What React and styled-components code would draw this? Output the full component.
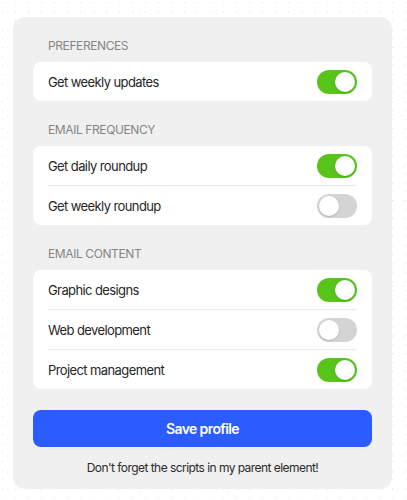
import React, { useState } from "react"
import styled, { createGlobalStyle } from "styled-components"

const GlobalStyle = createGlobalStyle`
   html, body {
      margin: 0;
      padding: 0;
   }
   body {
      font-family: Inter, "Noto Sans", sans-serif;
      background-color: #fff;
      background-image:
         radial-gradient(circle at 20% 30%, rgba(240, 170, 110, 0.22) 0.6px, transparent 1.2px),
         radial-gradient(circle at 70% 80%, rgba(240, 170, 110, 0.14) 0.6px, transparent 1.2px);
      background-size: 13px 9px, 11px 17px;
   }
`

const sections = [
   {
      title: "Preferences",
      items: [{ label: "Get weekly updates", on: true }],
   },
   {
      title: "Email frequency",
      items: [
         { label: "Get daily roundup", on: true },
         { label: "Get weekly roundup", on: false },
      ],
   },
   {
      title: "Email content",
      items: [
         { label: "Graphic designs", on: true },
         { label: "Web development", on: false },
         { label: "Project management", on: true },
      ],
   },
]

const Toggle = ({ on, onClick }) => (
   <Track $on={on} onClick={onClick}>
      <Knob $on={on} />
   </Track>
)

const App = () => {
   const [state, setState] = useState(sections.map(s => s.items.map(i => i.on)))

   const flip = (si, ii) => {
      setState(prev => prev.map((row, r) => row.map((v, c) => (r === si && c === ii ? !v : v))))
   }

   return (
      <Page>
         <GlobalStyle />
         <Card>
            {sections.map((section, si) => (
               <Section key={section.title}>
                  <Label>{section.title}</Label>
                  <Group>
                     {section.items.map((item, ii) => (
                        <Row key={item.label}>
                           <RowText>{item.label}</RowText>
                           <Toggle on={state[si][ii]} onClick={() => flip(si, ii)} />
                        </Row>
                     ))}
                  </Group>
               </Section>
            ))}
            <SaveButton>Save profile</SaveButton>
            <Note>Don't forget the scripts in my parent element!</Note>
         </Card>
      </Page>
   )
}

const Page = styled.div`
   padding: 17px 15px 12px 13px;
`

const Card = styled.div`
   display: flex;
   flex-direction: column;
   background: #f0f0f0;
   border-radius: 12px;
   padding: 21px 20px 13px;
`

const Section = styled.div`
   display: flex;
   flex-direction: column;
   gap: 8px;
   margin-bottom: 21px;
   &:last-of-type {
      margin-bottom: 20px;
   }
`

const Label = styled.div`
   font-size: 12px;
   line-height: 16px;
   text-transform: uppercase;
   color: #858585;
   padding-left: 15px;
   letter-spacing: -0.4px;
`

const Group = styled.div`
   background: #fff;
   border-radius: 8px;
   padding: 0 15px;
`

const Row = styled.div`
   display: flex;
   align-items: center;
   justify-content: space-between;
   height: 39px;
   & + & {
      border-top: 1px solid #ebebeb;
   }
`

const RowText = styled.span`
   font-size: 13px;
   letter-spacing: -0.6px;
   color: #262626;
`

const Track = styled.div`
   position: relative;
   width: 40px;
   height: 24px;
   border-radius: 12px;
   background: ${p => (p.$on ? "#58c41a" : "#d4d4d4")};
   cursor: pointer;
   flex-shrink: 0;
`

const Knob = styled.div`
   position: absolute;
   top: 2px;
   left: ${p => (p.$on ? "18px" : "2px")};
   width: 20px;
   height: 20px;
   border-radius: 50%;
   background: #fff;
   box-shadow: 0 1px 2px rgba(0, 0, 0, 0.15);
`

const SaveButton = styled.button`
   height: 37px;
   border: none;
   border-radius: 8px;
   background: #2b5cff;
   color: #fff;
   font-family: Inter, "Noto Sans", sans-serif;
   font-size: 14px;
   font-weight: 600;
   letter-spacing: -0.6px;
   cursor: pointer;
`

const Note = styled.div`
   margin-top: 13px;
   text-align: center;
   font-size: 12px;
   line-height: 16px;
   letter-spacing: -0.55px;
   color: #2a2a2a;
`

export default App
